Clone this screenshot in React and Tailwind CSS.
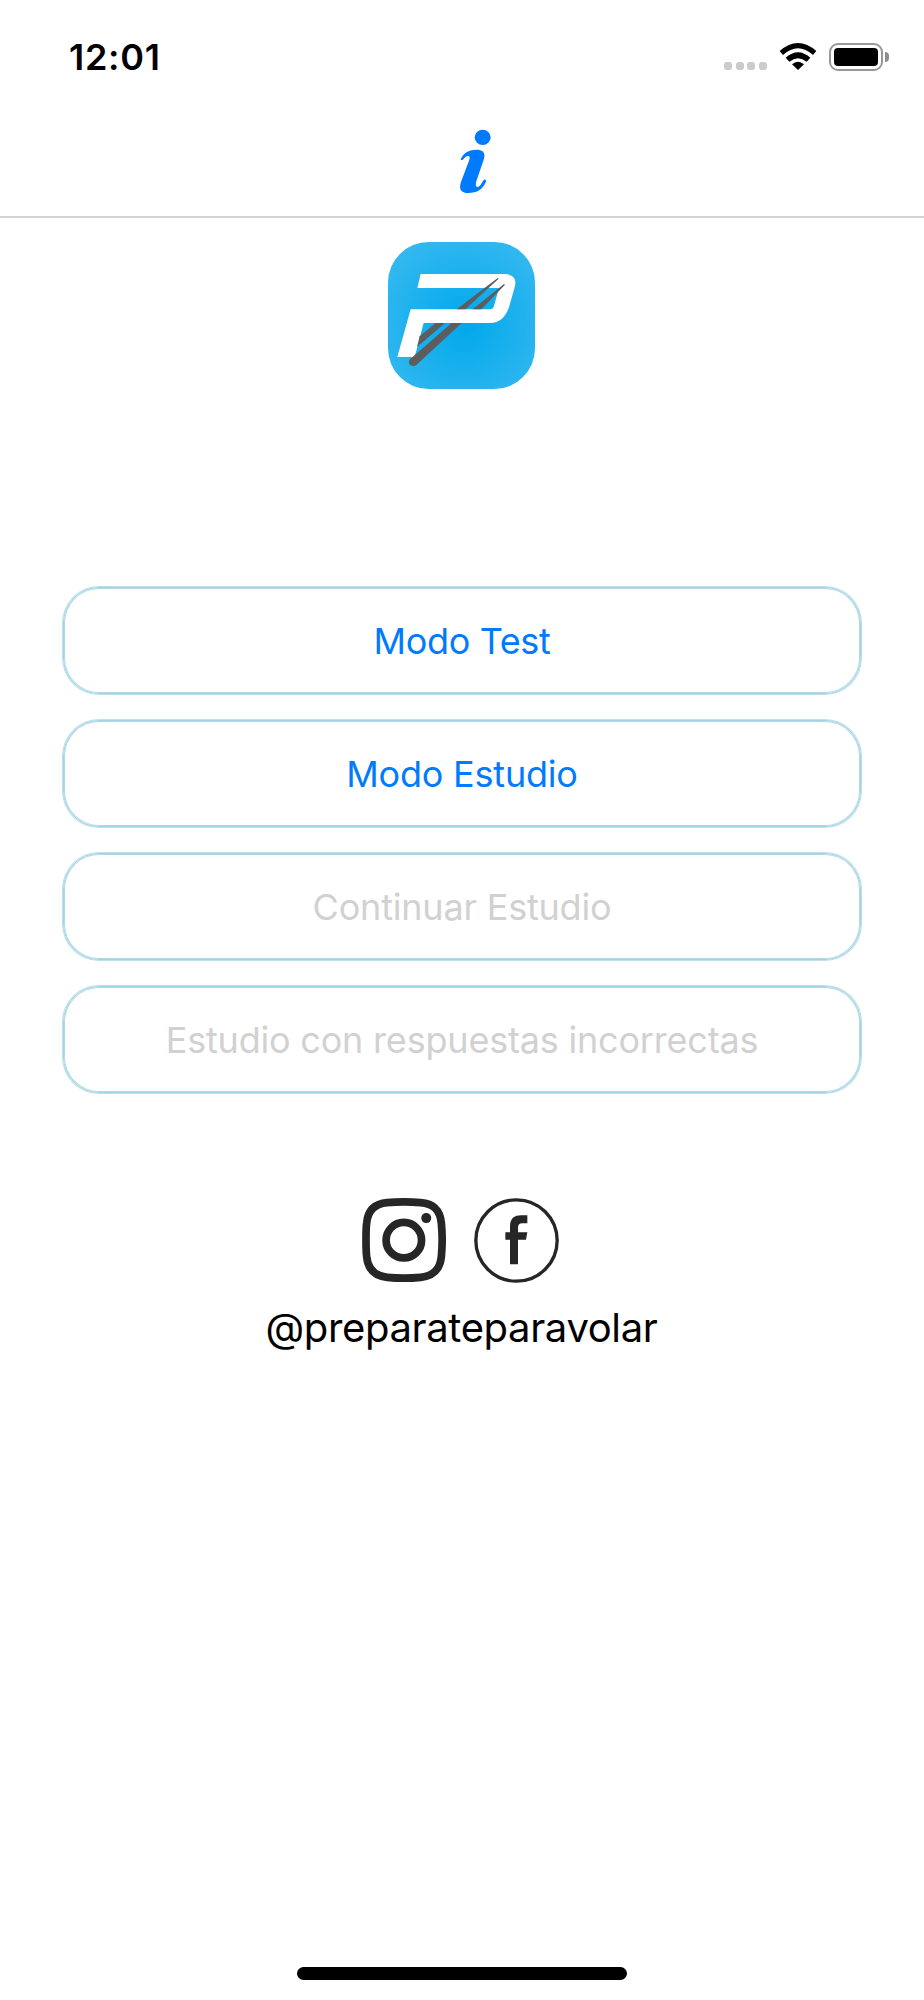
import React from "react";

const modes = [
  { label: "Modo Test", style: "text-[#007aff] tracking-[-0.35px]" },
  { label: "Modo Estudio", style: "text-[#007aff] tracking-[-0.2px]" },
  { label: "Continuar Estudio", style: "text-[#d1d1d1] tracking-[-0.2px]", disabled: true },
  {
    label: "Estudio con respuestas incorrectas",
    style: "text-[#d1d1d1] tracking-[-0.2px]",
    disabled: true,
  },
];

function StatusBar() {
  return (
    <div className="flex h-[114px] items-start justify-between pl-[69px] pr-[35px]">
      <span className="pt-[35px] text-[36px] leading-[44px] font-semibold tracking-[0.7px] text-black">
        12:01
      </span>
      <div className="flex items-start pt-[43px]">
        <div className="mt-[19px] flex gap-[3.6px]">
          <span className="h-2 w-2 rounded-[3px] bg-[#cbcbcb]" />
          <span className="h-2 w-2 rounded-[3px] bg-[#cbcbcb]" />
          <span className="h-2 w-2 rounded-[3px] bg-[#cbcbcb]" />
          <span className="h-2 w-2 rounded-[3px] bg-[#cbcbcb]" />
        </div>
        <svg className="ml-[12px] h-[27px] w-[38px]" viewBox="0 0 114 81">
          <path d="M2 24 Q57 -24 112 24 L102 36 Q57 -4 12 36Z" />
          <path d="M20 44 Q57 11 94 44 L83 56 Q57 35 31 56Z" />
          <path d="M39 64 Q57 49 75 64 L57 81Z" />
        </svg>
        <div className="ml-[12px] h-[28px] w-[54px] rounded-[9px] border-2 border-[#999] p-[3px]">
          <div className="h-full w-full rounded-[4px] bg-black" />
        </div>
        <div className="mt-[9px] ml-[2px] h-[10px] w-[4px] rounded-r-full bg-[#8e8e8e]" />
      </div>
    </div>
  );
}

function InfoIcon() {
  return (
    <svg className="h-[66px] w-[32px]" viewBox="0 0 96 198" fill="#007aff">
      <ellipse cx="71" cy="25" rx="24" ry="23" />
      <path d="M5 91 C14 70 31 62 53 62 C75 62 80 74 74 92 L52 157 C49 168 50 174 56 174 C63 174 68 162 74 153 C78 149 83 153 80 160 C71 181 55 192 27 192 C5 192 -1 179 6 159 L31 92 C34 82 30 80 25 81 C18 83 14 91 10 93 C7 94 5 93 5 91Z" />
    </svg>
  );
}

function Logo() {
  return (
    <svg className="mr-[1px] h-[147px] w-[147px]" viewBox="25 22 441 441">
      <defs>
        <radialGradient id="sky" cx="0.52" cy="0.56" r="0.68">
          <stop offset="0" stopColor="#00a8eb" />
          <stop offset="1" stopColor="#37b9f0" />
        </radialGradient>
      </defs>
      <rect x="25" y="22" width="441" height="441" rx="122" fill="url(#sky)" />
      <path
        d="M123 118 H375 C402 119 412 134 405 158 L389 214 C379 247 360 265 331 265 H132 L105 367 H53 L93 224 H331 C337 224 341 220 343 214 L358 160 H113Z"
        fill="white"
      />
      <g fill="#5b5d5e">
        <path d="M354 130 L357 132 L257 224 H231Z" />
        <path d="M373 148 L376 150 L305 224 H279Z" />
        <path d="M168 265 H196 L112 337 L120 305Z" />
        <path d="M216 265 H246 L111 390 C103 397 90 394 88 386 C86 379 90 374 96 369Z" />
      </g>
    </svg>
  );
}

function InstagramIcon() {
  return (
    <svg className="h-[84px] w-[84px]" viewBox="37 38 251 251" fill="none" stroke="#262626">
      <path
        d="M49 163 C49 142 49 125 51 112 C55 74 75 55 112 52 C142 49 182 49 212 52 C250 55 270 74 274 112 C277 142 277 184 274 214 C270 252 250 271 212 275 C182 278 142 278 112 275 C75 271 55 252 51 214 C49 200 49 184 49 163Z"
        strokeWidth="23"
      />
      <circle cx="162" cy="164" r="53" strokeWidth="23" />
      <circle cx="229" cy="98" r="15" fill="#262626" stroke="none" />
    </svg>
  );
}

function FacebookIcon() {
  return (
    <svg className="h-[85px] w-[85px]" viewBox="374 38 255 255" fill="none">
      <circle cx="501.5" cy="165.5" r="122" stroke="#262626" strokeWidth="10" />
      <path
        d="M482 237 V163 H468 V141 H482 V125 C482 99 494 90 516 90 H534 V114 H520 C510 114 506 118 506 127 V141 H534 L530 163 H506 V237Z"
        fill="#262626"
      />
    </svg>
  );
}

function App() {
  return (
    <div className="flex h-[2000px] w-[924px] flex-col overflow-hidden bg-white font-['Inter',sans-serif]">
      <StatusBar />

      {/* Navigation bar */}
      <header className="flex h-[104px] justify-center border-b-2 border-[#d4d4d4] pt-[15px] pl-[26px]">
        <InfoIcon />
      </header>

      <main className="flex flex-1 flex-col items-center pt-[24px]">
        <Logo />

        <div className="mt-[198px] flex w-[798px] flex-col gap-[26px]">
          {modes.map((mode) => (
            <button
              key={mode.label}
              disabled={mode.disabled}
              className="h-[107px] rounded-[36px] border border-[#a3d3e2] shadow-[0_0_0_1px_#bfe1eb,inset_0_0_0_1px_#b0dae7]"
            >
              <span className={`text-[36px] leading-[44px] whitespace-nowrap ${mode.style}`}>
                {mode.label}
              </span>
            </button>
          ))}
        </div>

        {/* Social links */}
        <div className="mt-[105px] flex gap-[28px] pr-[3px]">
          <InstagramIcon />
          <FacebookIcon />
        </div>
        <p className="mt-[20px] pr-[1px] text-[40px] leading-[50px] tracking-[-0.37px] text-black">
          @preparateparavolar
        </p>
      </main>

      <div className="mb-[20px] h-[13px] w-[330px] shrink-0 self-center rounded-full bg-black" />
    </div>
  );
}

export default App;
